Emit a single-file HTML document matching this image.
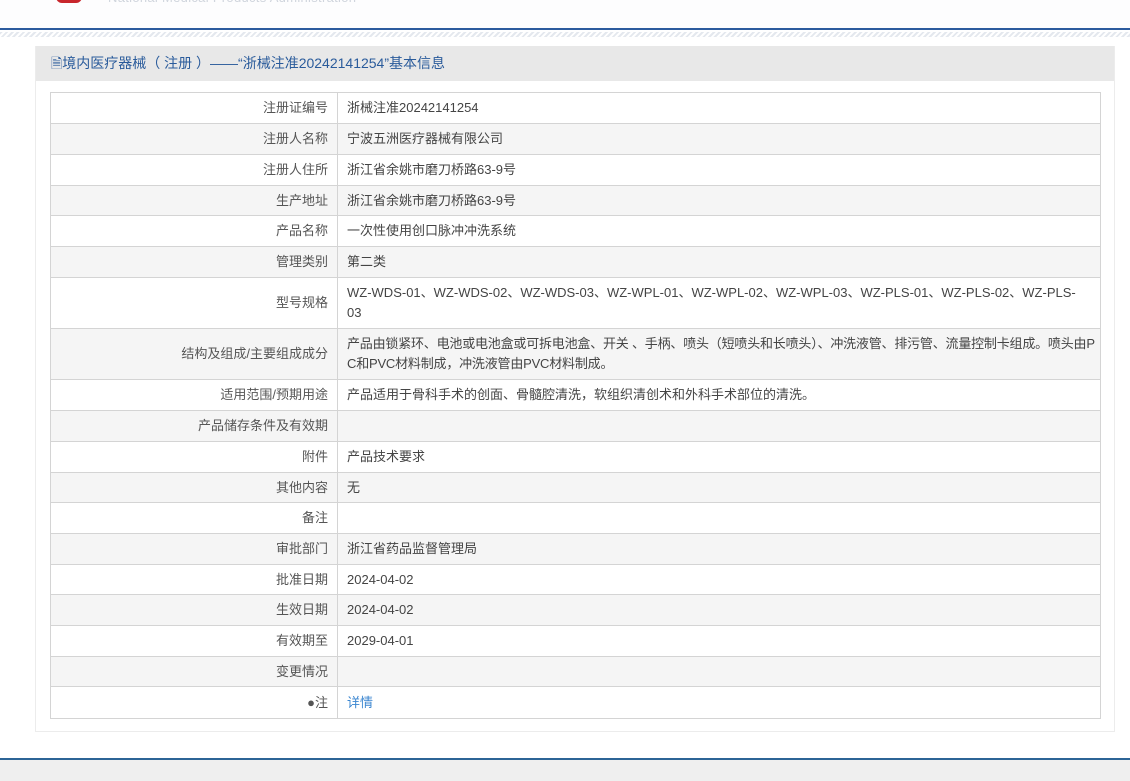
<!DOCTYPE html>
<html><head><meta charset="utf-8"><style>
*{margin:0;padding:0;box-sizing:border-box}
body{width:1130px;height:781px;background:#fff;font-family:"Liberation Sans","Microsoft YaHei","Noto Sans CJK SC",sans-serif;font-size:13px;color:#444;position:relative;overflow:hidden}
.top{position:absolute;left:0;top:0;width:1130px;height:30px;background:#fdfdfe;border-bottom:2px solid #2c5b9e}
.hatch{position:absolute;left:0;top:32px;width:1130px;height:5px;background:repeating-linear-gradient(135deg,#e4e8ee 0 2px,#fff 2px 4px)}
.logo{position:absolute;left:56px;top:-4px;width:26px;height:7px;background:#c8262c;border-radius:0 0 6px 6px}
.en{position:absolute;left:108px;top:-10px;font-size:13px;color:#d0d5dd;letter-spacing:0.3px}
.panel{position:absolute;left:35px;top:46px;width:1080px;height:686px;border:1px solid #ececec;border-top:none}
.ph{height:35px;background:#e8e8e8;color:#2a5b9b;font-size:14px;line-height:35px;padding-left:15px}
table{position:absolute;left:14px;top:46px;width:1051px;border-collapse:collapse;border:1px solid #c8c8c8;table-layout:fixed}
td{border:1px solid #d4d4d4;padding:0 9px;line-height:20px;vertical-align:middle}
td.l{width:287px;text-align:right;color:#555}
td.n{white-space:nowrap;overflow:hidden}
td.s{letter-spacing:-0.2px}
tr:nth-child(even){background:#f5f5f5}
.foot{position:absolute;left:0;top:758px;width:1130px;height:23px;background:#efefef;border-top:2px solid #2c6496}
a{color:#3b86d0;text-decoration:none}
</style></head><body>
<div class="top"><div class="logo"></div><div class="en">National Medical Products Administration</div></div>
<div class="hatch"></div>
<div class="panel">
<div class="ph">🗎境内医疗器械（ 注册 ）——“浙械注准20242141254”基本信息</div>
<table>
<tr style="height:31px"><td class="l">注册证编号</td><td>浙械注准20242141254</td></tr>
<tr style="height:31px"><td class="l">注册人名称</td><td>宁波五洲医疗器械有限公司</td></tr>
<tr style="height:31px"><td class="l">注册人住所</td><td>浙江省余姚市磨刀桥路63-9号</td></tr>
<tr style="height:30px"><td class="l">生产地址</td><td>浙江省余姚市磨刀桥路63-9号</td></tr>
<tr style="height:31px"><td class="l">产品名称</td><td>一次性使用创口脉冲冲洗系统</td></tr>
<tr style="height:31px"><td class="l">管理类别</td><td>第二类</td></tr>
<tr style="height:51px"><td class="l">型号规格</td><td class="n">WZ-WDS-01、WZ-WDS-02、WZ-WDS-03、WZ-WPL-01、WZ-WPL-02、WZ-WPL-03、WZ-PLS-01、WZ-PLS-02、WZ-PLS-<br>03</td></tr>
<tr style="height:51px"><td class="l">结构及组成/主要组成成分</td><td class="n s">产品由锁紧环、电池或电池盒或可拆电池盒、开关 、手柄、喷头（短喷头和长喷头）、冲洗液管、排污管、流量控制卡组成。喷头由P<br>C和PVC材料制成，冲洗液管由PVC材料制成。</td></tr>
<tr style="height:31px"><td class="l">适用范围/预期用途</td><td>产品适用于骨科手术的创面、骨髓腔清洗，软组织清创术和外科手术部位的清洗。</td></tr>
<tr style="height:31px"><td class="l">产品储存条件及有效期</td><td></td></tr>
<tr style="height:31px"><td class="l">附件</td><td>产品技术要求</td></tr>
<tr style="height:30px"><td class="l">其他内容</td><td>无</td></tr>
<tr style="height:31px"><td class="l">备注</td><td></td></tr>
<tr style="height:31px"><td class="l">审批部门</td><td>浙江省药品监督管理局</td></tr>
<tr style="height:30px"><td class="l">批准日期</td><td>2024-04-02</td></tr>
<tr style="height:31px"><td class="l">生效日期</td><td>2024-04-02</td></tr>
<tr style="height:31px"><td class="l">有效期至</td><td>2029-04-01</td></tr>
<tr style="height:30px"><td class="l">变更情况</td><td></td></tr>
<tr style="height:32px"><td class="l"><span style="color:#555">●</span>注</td><td><a>详情</a></td></tr>
</table>
</div>
<div class="foot"></div>
</body></html>
